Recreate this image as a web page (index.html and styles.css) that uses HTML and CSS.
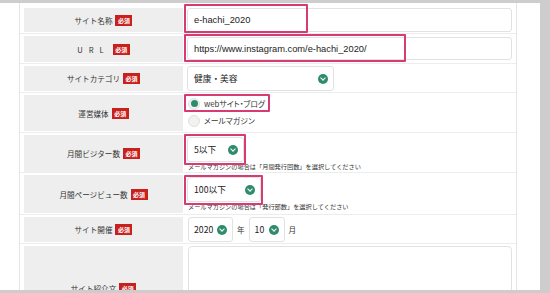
FILE: index.html
```html
<!DOCTYPE html>
<html lang="ja">
<head>
<meta charset="utf-8">
<title>サイト登録</title>
<link rel="stylesheet" href="styles.css">
</head>
<body>
<div class="frame">
  <div class="page">
    <div class="form">
      <div class="row r1">
        <div class="label">サイト名称<span class="req">必須</span></div>
        <div class="value">
          <div class="input">e-hachi_2020</div>
          <span class="mark m1"></span>
        </div>
      </div>
      <div class="row r2">
        <div class="label"><span class="spaced">URL</span><span class="req">必須</span></div>
        <div class="value">
          <div class="input">https://www.instagram.com/e-hachi_2020/</div>
          <span class="mark m2"></span>
        </div>
      </div>
      <div class="row r3">
        <div class="label">サイトカテゴリ<span class="req">必須</span></div>
        <div class="value">
          <div class="select s-cat">健康・美容<span class="chev"></span></div>
        </div>
      </div>
      <div class="row r4">
        <div class="label">運営媒体<span class="req">必須</span></div>
        <div class="value">
          <div class="radio"><span class="dot on"></span>webサイト・ブログ</div>
          <div class="radio"><span class="dot"></span>メールマガジン</div>
          <span class="mark m4"></span>
        </div>
      </div>
      <div class="row r5">
        <div class="label">月間ビジター数<span class="req">必須</span></div>
        <div class="value">
          <div class="select s-vis">5以下<span class="chev"></span></div>
          <p class="note">メールマガジンの場合は「月間発行回数」を選択してください</p>
          <span class="mark m5"></span>
        </div>
      </div>
      <div class="row r6">
        <div class="label">月間ページビュー数<span class="req">必須</span></div>
        <div class="value">
          <div class="select s-pv">100以下<span class="chev"></span></div>
          <p class="note">メールマガジンの場合は「発行部数」を選択してください</p>
          <span class="mark m6"></span>
        </div>
      </div>
      <div class="row r7">
        <div class="label">サイト開催<span class="req">必須</span></div>
        <div class="value date">
          <div class="select s-year">2020<span class="chev"></span></div>
          <span class="unit">年</span>
          <div class="select s-month">10<span class="chev"></span></div>
          <span class="unit">月</span>
        </div>
      </div>
      <div class="row r8">
        <div class="label">サイト紹介文<span class="req">必須</span></div>
        <div class="value">
          <div class="textarea"></div>
        </div>
      </div>
    </div>
  </div>
</div>
</body>
</html>
```

FILE: styles.css
```css
* { box-sizing: border-box; }
html, body { margin: 0; padding: 0; }
body {
  font-family: "Noto Sans CJK JP", "Noto Sans", sans-serif;
  color: #333;
  background: #ccc;
}
.frame {
  width: 550px;
  height: 293px;
  background: #cdcdcd;
  padding: 3px 10px 3px 0;
}
.page {
  background: #fff;
  height: 100%;
  overflow: hidden;
  padding: 0 23px 0 19px;
}
.form {
  height: 100%;
  border-left: 1px solid #e4e4e4;
  border-right: 1px solid #e4e4e4;
  padding-top: 3px;
}
.row {
  display: grid;
  grid-template-columns: 159px 1fr;
  column-gap: 3px;
  padding: 2px 0 1px 4px;
  border-bottom: 1px solid #ededed;
}
.r1 { height: 28px; }
.r2 { height: 30px; }
.r3 { height: 29px; }
.r4 { height: 40px; }
.r5 { height: 40px; }
.r6 { height: 42px; }
.r7 { height: 29px; }
.r8 { height: 120px; border-bottom: none; }

.label {
  background: #eeeeee;
  display: flex;
  align-items: center;
  justify-content: center;
  gap: 3px;
  font-size: 7.6px;
  color: #333;
}
.spaced { letter-spacing: 6px; }
.req {
  display: inline-flex;
  align-items: center;
  justify-content: center;
  width: 17px;
  height: 11px;
  background: #c8201d;
  color: #fff;
  font-size: 6px;
  font-weight: 700;
}
.r8 .label { align-items: flex-end; padding-bottom: 69px; }

.value {
  position: relative;
  padding-left: 1px;
}
.input {
  width: 325px;
  height: 24px;
  border: 1px solid #e2e2e2;
  border-radius: 3px;
  padding-left: 6px;
  font-family: "Liberation Sans", Arial, sans-serif;
  font-size: 9.3px;
  line-height: 22px;
  color: #222;
}
.r2 .input { margin-top: 1px; height: 23px; }

.select {
  position: relative;
  height: 25px;
  border: 1px solid #e2e2e2;
  border-radius: 3px;
  padding-left: 6px;
  font-size: 8.7px;
  line-height: 23px;
  color: #222;
}
.chev {
  position: absolute;
  right: 5px;
  top: 7px;
  width: 10px;
  height: 10px;
  border-radius: 50%;
  background: #2e8c6d;
}
.chev::after {
  content: "";
  position: absolute;
  left: 3px;
  top: 2.2px;
  width: 3px;
  height: 3px;
  border-right: 1.4px solid #fff;
  border-bottom: 1.4px solid #fff;
  transform: rotate(45deg);
}
.s-cat { width: 147px; }
.r5 .select, .r6 .select { margin-top: 2px; }
.s-vis { width: 57px; }
.s-pv { width: 74px; }

.radio {
  display: flex;
  align-items: center;
  height: 17px;
  font-size: 7.8px;
  font-feature-settings: "palt";
  color: #333;
  gap: 4px;
  padding-left: 1px;
}
.dot {
  width: 12px;
  height: 12px;
  border-radius: 50%;
  background: #f2f2f2;
  border: 1px solid #e0e0e0;
  position: relative;
  flex: none;
}
.dot.on::after {
  content: "";
  position: absolute;
  left: 1.5px;
  top: 1.5px;
  width: 7px;
  height: 7px;
  border-radius: 50%;
  background: #2e8c6d;
}

.note {
  margin: 0;
  font-size: 6.2px;
  line-height: 10px;
  color: #333;
  padding-left: 1px;
  white-space: nowrap;
}

.date {
  display: flex;
  align-items: center;
  gap: 3px;
  padding-left: 2px;
}
.s-year { width: 45px; padding-left: 5px; }
.s-month { width: 36px; padding-left: 5px; }
.unit { font-size: 7.6px; color: #333; margin: 0 1px; }

.textarea {
  margin-left: 1px;
  width: 324px;
  height: 80px;
  border: 1px solid #e2e2e2;
  border-radius: 4px;
}

.mark {
  position: absolute;
  border: 2px solid #d83a74;
  border-radius: 1px;
  pointer-events: none;
}
.m1 { left: -2px; top: -4px; width: 124px; height: 29px; }
.m2 { left: -2px; top: -2px; width: 222px; height: 28px; }
.m4 { left: -2px; top: -1px; width: 86px; height: 18px; }
.m5 { left: -2px; top: -1px; width: 62px; height: 31px; }
.m6 { left: -2px; top: 0px; width: 79px; height: 30px; }
```
